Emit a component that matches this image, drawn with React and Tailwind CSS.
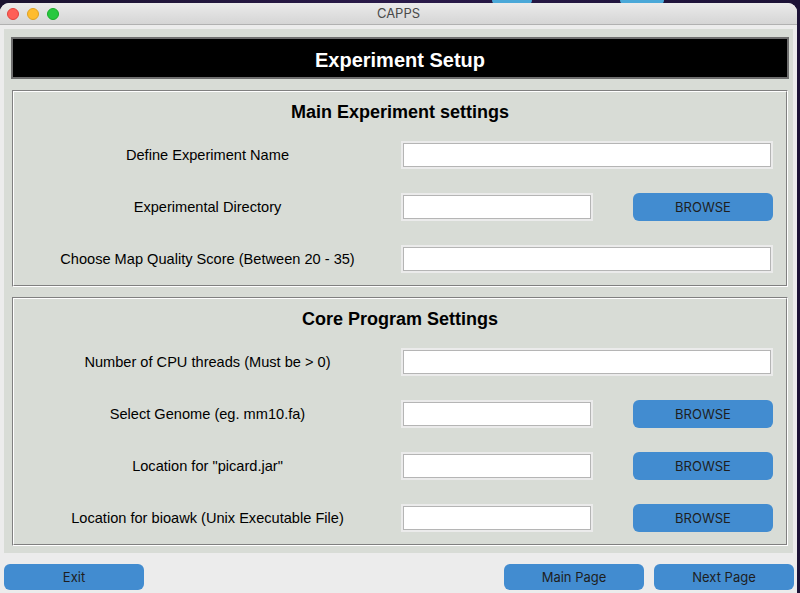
import React from "react";

const helv = { fontFamily: '"Liberation Sans", Arial, sans-serif' };
const sys = { fontFamily: 'Inter, "Noto Sans", sans-serif' };

function Input({ wide }) {
  return (
    <div className={`${wide ? "w-[372px]" : "w-[192px]"} h-[28px] border-2 border-[#ebebeb] shrink-0`}>
      <div className="w-full h-full border border-[#b5b5b5] bg-white" />
    </div>
  );
}

function BlueButton({ children, className = "" }) {
  return (
    <div
      className={`flex items-center justify-center rounded-[6px] bg-[#428cd0] text-[13px] text-[#1e1e1e] ${className}`}
      style={sys}
    >
      {children}
    </div>
  );
}

function Row({ label, browse }) {
  return (
    <div className="flex items-center h-[28px]">
      <div className="w-[387px] pt-[2px] text-center text-[14.6px] text-black" style={helv}>
        {label}
      </div>
      <Input wide={!browse} />
      {browse && (
        <BlueButton className="ml-[40px] w-[140px] h-[28px] pt-[1px]">BROWSE</BlueButton>
      )}
    </div>
  );
}

function Section({ title, rows, height }) {
  return (
    <div
      className={`w-[776px] ${height} border border-t-[#808080] border-l-[#808080] border-b-white border-r-white`}
    >
      <div className="w-full h-full border border-t-white border-l-white border-b-[#808080] border-r-[#808080] flex flex-col">
        <div
          className="h-[38px] pt-[3px] flex items-center justify-center font-bold text-[18px] text-black"
          style={helv}
        >
          {title}
        </div>
        <div className="mt-[11px] flex flex-col gap-[24px]">
          {rows.map((r, i) => (
            <Row key={i} label={r[0]} browse={r[1]} />
          ))}
        </div>
      </div>
    </div>
  );
}

export default function App() {
  return (
    <div className="w-[800px] h-[593px] overflow-hidden bg-gradient-to-r from-[#1b1330] via-[#2a1a4a] to-[#1c1236] relative">
      <div className="absolute left-[492px] top-0 w-[40px] h-[4px] rounded-b-full bg-[#4aa8d8]" />
      <div className="absolute left-[620px] top-0 w-[44px] h-[4px] rounded-b-full bg-[#4aa8d8]" />
      <div className="absolute left-0 top-[3px] w-[797px] h-[590px] rounded-t-[9px] overflow-hidden bg-[#ececec] flex flex-col">
        <div className="relative h-[22px] shrink-0 bg-gradient-to-b from-[#ebebeb] to-[#d5d5d5] border-b border-[#b1b1b1] flex items-center justify-center">
          <div className="absolute left-[7px] top-[5px] flex gap-[8px]">
            <div className="w-[12px] h-[12px] rounded-full bg-[#fe5f57] border border-[#e0443e]" />
            <div className="w-[12px] h-[12px] rounded-full bg-[#febc2e] border border-[#dea123]" />
            <div className="w-[12px] h-[12px] rounded-full bg-[#28c840] border border-[#1aab29]" />
          </div>
          <span className="text-[13px] text-[#4a4a4a]" style={sys}>
            CAPPS
          </span>
        </div>
        <div className="ml-[4px] mt-[4px] w-[789px] h-[524px] bg-[#d8dcd6] flex flex-col pl-[7px] pt-[8px]">
          <div className="w-[778px] h-[42px] pt-[3px] bg-black border-2 border-[#6f6f6f] flex items-center justify-center">
            <span className="text-white font-bold text-[20px]" style={helv}>
              Experiment Setup
            </span>
          </div>
          <div className="ml-[1px] mt-[11px] flex flex-col gap-[10px]">
            <Section
              title="Main Experiment settings"
              height="h-[197px]"
              rows={[
                ["Define Experiment Name", false],
                ["Experimental Directory", true],
                ["Choose Map Quality Score (Between 20 - 35)", false],
              ]}
            />
            <Section
              title="Core Program Settings"
              height="h-[249px]"
              rows={[
                ["Number of CPU threads (Must be > 0)", false],
                ["Select Genome (eg. mm10.fa)", true],
                ['Location for "picard.jar"', true],
                ["Location for bioawk (Unix Executable File)", true],
              ]}
            />
          </div>
        </div>
        <div className="mt-[11px] flex items-center pl-[4px]">
          <BlueButton className="w-[140px] h-[26px] pt-[1px]">Exit</BlueButton>
          <BlueButton className="ml-[360px] w-[140px] h-[26px] pt-[1px]">Main Page</BlueButton>
          <BlueButton className="ml-[10px] w-[140px] h-[26px] pt-[1px]">Next Page</BlueButton>
        </div>
      </div>
    </div>
  );
}
